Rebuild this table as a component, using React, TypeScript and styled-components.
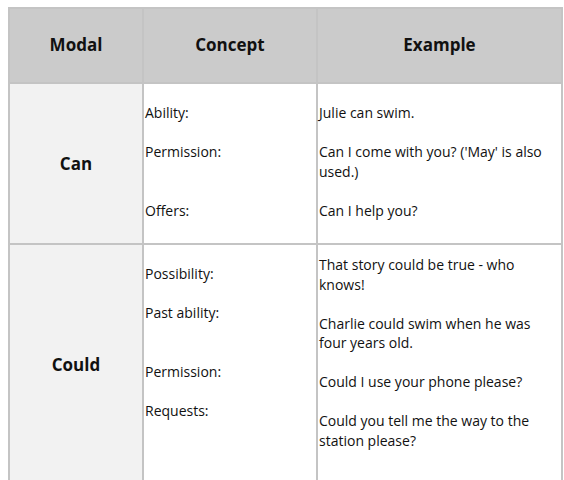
import { ReactElement, Fragment } from 'react';
import styled, { createGlobalStyle } from 'styled-components';

//
// Data
//

interface Usage {
  concept: string;
  conceptLines: number;
  example: string[];
}

interface ModalRow {
  modal: string;
  height: number;
  exampleTop: number;
  usages: Usage[];
}

const ROWS: ModalRow[] = [
  {
    modal: 'Can',
    height: 161,
    exampleTop: 19,
    usages: [
      { concept: 'Ability:', conceptLines: 1, example: ['Julie can swim.'] },
      {
        concept: 'Permission:',
        conceptLines: 2,
        example: ["Can I come with you? ('May' is also", 'used.)'],
      },
      { concept: 'Offers:', conceptLines: 1, example: ['Can I help you?'] },
    ],
  },
  {
    modal: 'Could',
    height: 240,
    exampleTop: 10,
    usages: [
      {
        concept: 'Possibility:',
        conceptLines: 1,
        example: ['That story could be true - who', 'knows!'],
      },
      {
        concept: 'Past ability:',
        conceptLines: 2,
        example: ['Charlie could swim when he was', 'four years old.'],
      },
      {
        concept: 'Permission:',
        conceptLines: 1,
        example: ['Could I use your phone please?'],
      },
      {
        concept: 'Requests:',
        conceptLines: 1,
        example: ['Could you tell me the way to the', 'station please?'],
      },
    ],
  },
];

const LINE = 19.5;
const LINE_COLOR = '#c4c4c4';

//
// Styles
//

const GlobalStyle = createGlobalStyle`
  html, body {
    margin: 0;
    background: #ffffff;
  }
  body {
    font-family: "Open Sans", "Liberation Sans", sans-serif;
    color: #111111;
  }
`;

const Page = styled.div`
  padding: 7px 0 0 8px;
  height: 480px;
  box-sizing: border-box;
  overflow: hidden;
`;

const Table = styled.div`
  width: 553px;
  display: grid;
  grid-template-columns: 134px 174px 1fr;
  border-top: 2px solid ${LINE_COLOR};
  border-left: 2px solid ${LINE_COLOR};
`;

const Cell = styled.div`
  border-right: 2px solid ${LINE_COLOR};
  border-bottom: 2px solid ${LINE_COLOR};
  box-sizing: border-box;
`;

const HeadCell = styled(Cell)`
  height: 75px;
  background: #cbcbcb;
  display: flex;
  align-items: center;
  justify-content: center;
  font-size: 17px;
  font-weight: 700;
  padding-bottom: 2px;
`;

const ModalCell = styled(Cell)<{ $height: number }>`
  height: ${({ $height }) => $height}px;
  background: #f2f2f2;
  display: flex;
  align-items: center;
  justify-content: center;
  font-size: 17px;
  font-weight: 700;
`;

const TextCell = styled(Cell)<{ $top: number }>`
  background: #ffffff;
  padding: ${({ $top }) => $top}px 0 0 1px;
  font-size: 14px;
  line-height: ${LINE}px;
  white-space: nowrap;
`;

const Para = styled.p<{ $lines: number }>`
  margin: 0 0 ${LINE}px;
  min-height: ${({ $lines }) => $lines * LINE}px;
`;

//
// Component
//

const App = (): ReactElement => (
  <>
    <GlobalStyle />
    <Page>
      <Table>
        <HeadCell>Modal</HeadCell>
        <HeadCell>Concept</HeadCell>
        <HeadCell>Example</HeadCell>
        {ROWS.map(({ modal, height, exampleTop, usages }) => (
          <Fragment key={modal}>
            <ModalCell $height={height}>{modal}</ModalCell>
            <TextCell $top={19}>
              {usages.map(({ concept, conceptLines }) => (
                <Para key={concept} $lines={conceptLines}>{concept}</Para>
              ))}
            </TextCell>
            <TextCell $top={exampleTop}>
              {usages.map(({ concept, example }) => (
                <Para key={concept} $lines={example.length}>
                  {example.map((line, i) => (
                    <span key={line}>
                      {i > 0 && <br />}
                      {line}
                    </span>
                  ))}
                </Para>
              ))}
            </TextCell>
          </Fragment>
        ))}
      </Table>
    </Page>
  </>
);

export default App;
